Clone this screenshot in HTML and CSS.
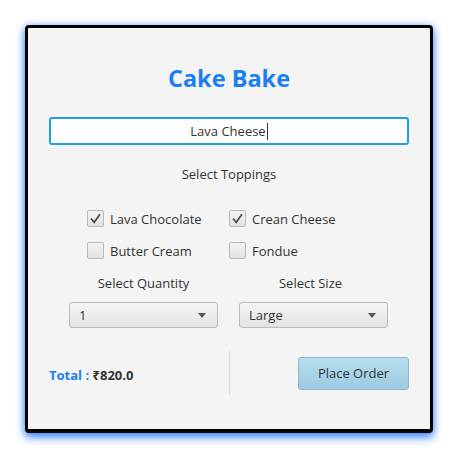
FILE: index.html
```html
<!DOCTYPE html>
<html>
<head>
<meta charset="utf-8">
<link rel="stylesheet" href="styles.css">
</head>
<body>
<div class="frame">
  <h1 class="title">Cake Bake</h1>
  <div class="field"><span class="value">Lava Cheese</span><span class="caret"></span></div>
  <div class="label toppings-label">Select Toppings</div>
  <div class="toppings">
    <label class="check"><span class="box on"><svg viewBox="0 0 17 17" width="17" height="17"><path d="M4 8.5 L7.2 12.3 L13 4.3" fill="none" stroke="#4a4a4a" stroke-width="1.7"/></svg></span>Lava Chocolate</label>
    <label class="check"><span class="box on"><svg viewBox="0 0 17 17" width="17" height="17"><path d="M4 8.5 L7.2 12.3 L13 4.3" fill="none" stroke="#4a4a4a" stroke-width="1.7"/></svg></span>Crean Cheese</label>
    <label class="check"><span class="box"></span>Butter Cream</label>
    <label class="check"><span class="box"></span>Fondue</label>
  </div>
  <div class="selects">
    <div class="sel-col">
      <div class="label">Select Quantity</div>
      <div class="combo"><span>1</span><span class="arrow"></span></div>
    </div>
    <div class="sel-col">
      <div class="label size-label">Select Size</div>
      <div class="combo"><span>Large</span><span class="arrow"></span></div>
    </div>
  </div>
  <div class="footer">
    <div class="total"><span class="total-key">Total :</span> <span class="total-val">₹820.0</span></div>
    <div class="sep"></div>
    <div class="btn-wrap"><button class="btn">Place Order</button></div>
  </div>
</div>
</body>
</html>
```
FILE: styles.css
```css
html, body {
  margin: 0;
  padding: 0;
  background: #ffffff;
  width: 458px;
  height: 458px;
  overflow: hidden;
}
body {
  font-family: "Open Sans", "Noto Sans", "DejaVu Sans", sans-serif;
  font-size: 13px;
  color: #333333;
}
.frame {
  margin: 25px 0 0 25px;
  width: 402px;
  height: 401px;
  border: 3px solid #000;
  border-bottom-width: 4px;
  border-radius: 4px;
  background: #f4f4f4;
  box-shadow: 0 4px 10px rgba(30, 120, 255, 0.9), 0 0 6px rgba(30, 120, 255, 0.35);
  display: flex;
  flex-direction: column;
  box-sizing: content-box;
}
.title {
  margin: 35px 0 0 0;
  height: 30px;
  line-height: 30px;
  text-align: center;
  font-size: 23.5px;
  font-weight: 700;
  color: #1a7ff0;
}
.field {
  margin: 24px 0 0 21px;
  width: 356px;
  height: 24px;
  border: 2px solid #1ea0e4;
  border-radius: 3px;
  background: #fff;
  display: flex;
  justify-content: center;
  align-items: center;
}
.value { line-height: 18px; }
.caret {
  display: inline-block;
  width: 1px;
  height: 17px;
  background: #333;
  margin-left: 1px;
}
.label {
  text-align: center;
  line-height: 18px;
  height: 18px;
}
.size-label { padding-right: 6px; }
.toppings-label { margin-top: 20px; }
.toppings {
  margin: 27px 0 0 59px;
  display: grid;
  grid-template-columns: 142px 142px;
  row-gap: 15px;
}
.check {
  display: flex;
  align-items: center;
  height: 17px;
  gap: 6px;
}
.box {
  width: 15px;
  height: 15px;
  border: 1px solid #b9b9b9;
  border-radius: 2px;
  background: linear-gradient(#f4f4f4, #e1e1e1);
  display: inline-block;
  position: relative;
  flex: none;
}
.box svg { position: absolute; left: -1px; top: -1px; }
.selects {
  margin: 15px 0 0 41px;
  display: flex;
  gap: 21px;
}
.sel-col {
  width: 149px;
  display: flex;
  flex-direction: column;
  gap: 10px;
}
.combo {
  height: 24px;
  border: 1px solid #bcbcbc;
  border-radius: 3px;
  background: linear-gradient(#f6f6f6, #e2e2e2);
  display: flex;
  align-items: center;
  justify-content: space-between;
  padding: 0 11px 0 9px;
}
.arrow {
  width: 0;
  height: 0;
  border-left: 4.5px solid transparent;
  border-right: 4.5px solid transparent;
  border-top: 5px solid #555;
}
.footer {
  margin-top: 23px;
  height: 44px;
  display: flex;
  align-items: center;
  padding-left: 21px;
}
.total {
  width: 180px;
  font-weight: 700;
  padding-top: 4px;
}
.total-key { color: #1a80f0; }
.total-val { color: #333; }
.sep {
  width: 1px;
  height: 44px;
  background: #d8d8d8;
}
.btn-wrap {
  flex: 1;
  display: flex;
  justify-content: flex-end;
  padding-right: 21px;
}
.btn {
  width: 111px;
  height: 33px;
  border: 1px solid #8fb7cc;
  border-radius: 3px;
  background: linear-gradient(#b7deef, #9ccae0);
  font-family: "Open Sans", "Noto Sans", "DejaVu Sans", sans-serif;
  font-size: 13px;
  color: #333;
  padding: 0;
}
```
